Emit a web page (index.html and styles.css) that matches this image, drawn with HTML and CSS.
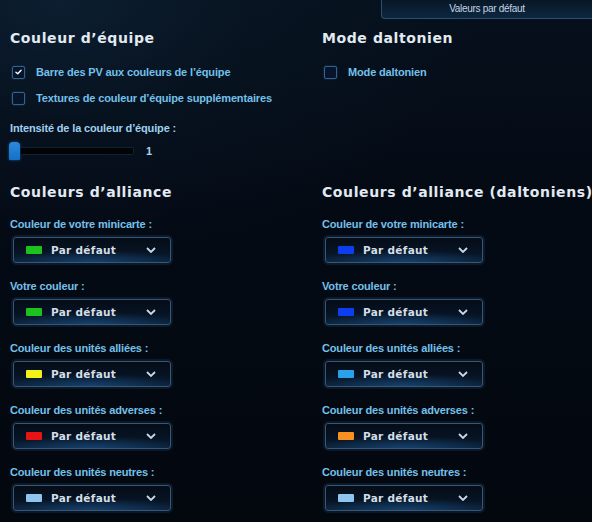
FILE: index.html
```html
<!DOCTYPE html>
<html lang="fr">
<head>
<meta charset="utf-8">
<title>Options</title>
<link rel="stylesheet" href="styles.css">
</head>
<body>
<div class="page">
  <div class="topbar"><button class="defaults">Valeurs par défaut</button></div>

  <div class="grid team">
    <div class="col">
      <h2 class="heading">Couleur d’équipe</h2>
      <label class="check"><span class="box on"><svg viewBox="0 0 12 12" width="12" height="12"><path d="M3.2 6.2 L5.2 8 L8.8 4" fill="none" stroke="#fff" stroke-width="1.5" stroke-linecap="round" stroke-linejoin="round"/></svg></span><span class="check-text">Barre des PV aux couleurs de l’équipe</span></label>
      <label class="check"><span class="box"></span><span class="check-text">Textures de couleur d’équipe supplémentaires</span></label>
      <div class="label intens">Intensité de la couleur d’équipe :</div>
      <div class="slider"><span class="thumb"></span><span class="track"></span><span class="value">1</span></div>
    </div>
    <div class="col">
      <h2 class="heading">Mode daltonien</h2>
      <label class="check"><span class="box"></span><span class="check-text">Mode daltonien</span></label>
    </div>
  </div>

  <div class="grid alliance">
    <div class="col">
      <h2 class="heading">Couleurs d’alliance</h2>
      <div class="label">Couleur de votre minicarte :</div>
      <div class="select"><span class="swatch green"></span><span class="sel-text">Par défaut</span><svg class="chev" viewBox="0 0 10 6" width="10" height="6"><path d="M1 1 L5 5 L9 1" fill="none" stroke="#c8d8e8" stroke-width="1.8"/></svg></div>
      <div class="label">Votre couleur :</div>
      <div class="select"><span class="swatch green"></span><span class="sel-text">Par défaut</span><svg class="chev" viewBox="0 0 10 6" width="10" height="6"><path d="M1 1 L5 5 L9 1" fill="none" stroke="#c8d8e8" stroke-width="1.8"/></svg></div>
      <div class="label">Couleur des unités alliées :</div>
      <div class="select"><span class="swatch yellow"></span><span class="sel-text">Par défaut</span><svg class="chev" viewBox="0 0 10 6" width="10" height="6"><path d="M1 1 L5 5 L9 1" fill="none" stroke="#c8d8e8" stroke-width="1.8"/></svg></div>
      <div class="label">Couleur des unités adverses :</div>
      <div class="select"><span class="swatch red"></span><span class="sel-text">Par défaut</span><svg class="chev" viewBox="0 0 10 6" width="10" height="6"><path d="M1 1 L5 5 L9 1" fill="none" stroke="#c8d8e8" stroke-width="1.8"/></svg></div>
      <div class="label">Couleur des unités neutres :</div>
      <div class="select"><span class="swatch pale"></span><span class="sel-text">Par défaut</span><svg class="chev" viewBox="0 0 10 6" width="10" height="6"><path d="M1 1 L5 5 L9 1" fill="none" stroke="#c8d8e8" stroke-width="1.8"/></svg></div>
    </div>
    <div class="col">
      <h2 class="heading">Couleurs d’alliance (daltoniens)</h2>
      <div class="label">Couleur de votre minicarte :</div>
      <div class="select"><span class="swatch blue"></span><span class="sel-text">Par défaut</span><svg class="chev" viewBox="0 0 10 6" width="10" height="6"><path d="M1 1 L5 5 L9 1" fill="none" stroke="#c8d8e8" stroke-width="1.8"/></svg></div>
      <div class="label">Votre couleur :</div>
      <div class="select"><span class="swatch blue"></span><span class="sel-text">Par défaut</span><svg class="chev" viewBox="0 0 10 6" width="10" height="6"><path d="M1 1 L5 5 L9 1" fill="none" stroke="#c8d8e8" stroke-width="1.8"/></svg></div>
      <div class="label">Couleur des unités alliées :</div>
      <div class="select"><span class="swatch cyan"></span><span class="sel-text">Par défaut</span><svg class="chev" viewBox="0 0 10 6" width="10" height="6"><path d="M1 1 L5 5 L9 1" fill="none" stroke="#c8d8e8" stroke-width="1.8"/></svg></div>
      <div class="label">Couleur des unités adverses :</div>
      <div class="select"><span class="swatch orange"></span><span class="sel-text">Par défaut</span><svg class="chev" viewBox="0 0 10 6" width="10" height="6"><path d="M1 1 L5 5 L9 1" fill="none" stroke="#c8d8e8" stroke-width="1.8"/></svg></div>
      <div class="label">Couleur des unités neutres :</div>
      <div class="select"><span class="swatch pale"></span><span class="sel-text">Par défaut</span><svg class="chev" viewBox="0 0 10 6" width="10" height="6"><path d="M1 1 L5 5 L9 1" fill="none" stroke="#c8d8e8" stroke-width="1.8"/></svg></div>
    </div>
  </div>
</div>
</body>
</html>
```

FILE: styles.css
```css
* { box-sizing: border-box; }
html, body { margin: 0; padding: 0; }
body {
  width: 592px;
  height: 522px;
  overflow: hidden;
  background:
    radial-gradient(ellipse 420px 260px at 60px 0px, #0c1e30 0%, rgba(10,26,42,0.4) 45%, rgba(4,10,20,0) 100%),
    linear-gradient(180deg, #06101c 0%, #040a14 40%, #03080f 100%);
  font-family: "Liberation Sans", Arial, sans-serif;
  color: #7cc4ec;
}
.page { display: flex; flex-direction: column; }
.topbar { display: flex; justify-content: flex-end; height: 19px; }
.defaults {
  width: 211px;
  height: 19px;
  margin: 0;
  padding: 0 0 2px 0;
  border: 1px solid #2b4d70;
  border-top: none;
  border-right: none;
  border-radius: 0 0 0 4px;
  background: linear-gradient(180deg, #081726 0%, #0d2740 100%);
  color: #c4d4e4;
  font-family: "Liberation Sans", Arial, sans-serif;
  font-size: 10px;
  letter-spacing: -0.3px;
}
.grid {
  display: grid;
  grid-template-columns: 312px 1fr;
  padding-left: 10px;
}
.col { display: flex; flex-direction: column; align-items: flex-start; }
.heading {
  margin: 0;
  height: 20px;
  line-height: 20px;
  font-family: "DejaVu Sans", sans-serif;
  font-weight: bold;
  font-size: 14px;
  letter-spacing: 0.6px;
  color: #e2eaf2;
  white-space: nowrap;
}
.team { margin-top: 9px; }
.team .heading { margin-bottom: 11px; }
.check { display: flex; align-items: center; height: 26px; padding-left: 2px; }
.box {
  width: 13px;
  height: 13px;
  border: 1.5px solid #33628e;
  border-radius: 2px;
  background: #07142a;
  display: flex;
  align-items: center;
  justify-content: center;
  margin-right: 11px;
  box-shadow: 0 0 2px rgba(60,120,180,0.5);
}
.box svg { display: block; }
.check-text, .label {
  font-family: "Liberation Sans", Arial, sans-serif;
  font-weight: bold;
  font-size: 11px;
  letter-spacing: -0.15px;
  color: #74c0ea;
  white-space: nowrap;
}
.label { height: 16px; line-height: 16px; }
.intens { margin-top: 9px; color: #9fd0ef; }
.slider { display: flex; align-items: center; height: 18px; margin-top: 6px; margin-left: -1px; }
.thumb {
  width: 11px;
  height: 18px;
  background: linear-gradient(180deg, #2a8ae0, #1670c4);
  border-radius: 4px 4px 1px 1px;
  box-shadow: 0 0 3px rgba(40,140,230,0.6);
}
.track {
  width: 114px;
  height: 8px;
  background: #010306;
  border: 1px solid #0f2234;
  border-radius: 2px;
}
.value {
  margin-left: 12px;
  font-family: "Liberation Sans", Arial, sans-serif;
  font-weight: bold;
  font-size: 11px;
  color: #a8d4f0;
}
.alliance { margin-top: 22px; }
.alliance .heading { margin-bottom: 14px; }
.select {
  display: flex;
  align-items: center;
  width: 158px;
  height: 26px;
  margin: 5px 0 15px 3px;
  border: 1px solid #385676;
  border-radius: 3px;
  background:
    radial-gradient(ellipse 90px 12px at 50% 100%, rgba(30,90,150,0.55), rgba(30,90,150,0) 100%),
    linear-gradient(180deg, #050c17 0%, #071424 60%, #0b223a 100%);
  box-shadow: 0 0 0 2px rgba(22,44,68,0.45);
  padding-left: 12px;
}
.swatch { width: 16px; height: 8px; border-radius: 1px; margin-right: 9px; }
.green { background: #1ec21e; }
.yellow { background: #f2f218; }
.red { background: #e81414; }
.pale { background: #8ec4f0; }
.blue { background: #0c3ef0; }
.cyan { background: #28a2e8; }
.orange { background: #fa9020; }
.sel-text {
  font-family: "DejaVu Sans", sans-serif;
  font-weight: bold;
  font-size: 10.5px;
  letter-spacing: 0.3px;
  color: #d4dee8;
  white-space: nowrap;
  flex: 1;
}
.chev { margin-right: 14px; display: block; }
```
